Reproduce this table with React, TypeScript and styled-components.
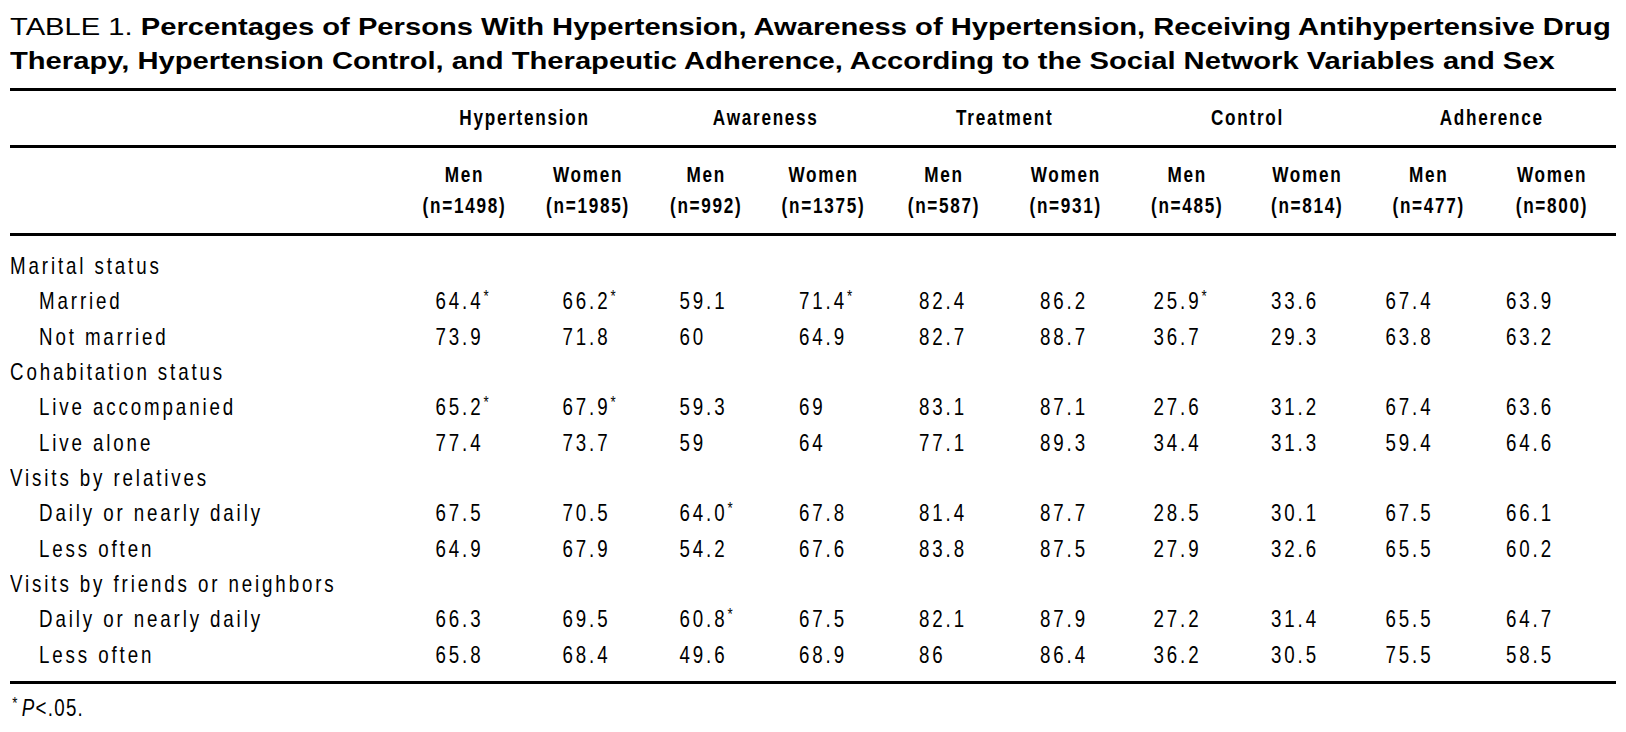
import styled, { createGlobalStyle } from "styled-components";

const GlobalStyle = createGlobalStyle`
    html, body {
        margin: 0;
        padding: 0;
        background: #fff;
        color: #000;
    }
`;

// label column + 10 data columns (Men / Women for each measure)
const COLUMNS = "390.5px 127px 120px 116.5px 119px 122px 121.5px 120.5px 120.5px 121.5px 126px";
const VALUE_PAD = [34.5, 34.5, 31.5, 35, 36, 35, 26.5, 24, 17.5, 17];
// no condensed face is installed, so the narrow type is squeezed horizontally
const NARROW = 0.78;

const GROUPS = ["Hypertension", "Awareness", "Treatment", "Control", "Adherence"];
const SIZES = [
    ["Men", "1498"],
    ["Women", "1985"],
    ["Men", "992"],
    ["Women", "1375"],
    ["Men", "587"],
    ["Women", "931"],
    ["Men", "485"],
    ["Women", "814"],
    ["Men", "477"],
    ["Women", "800"],
];

type Row = { label: string; values?: string[] };

const ROWS: Row[] = [
    { label: "Marital status" },
    { label: "Married", values: ["64.4*", "66.2*", "59.1", "71.4*", "82.4", "86.2", "25.9*", "33.6", "67.4", "63.9"] },
    { label: "Not married", values: ["73.9", "71.8", "60", "64.9", "82.7", "88.7", "36.7", "29.3", "63.8", "63.2"] },
    { label: "Cohabitation status" },
    { label: "Live accompanied", values: ["65.2*", "67.9*", "59.3", "69", "83.1", "87.1", "27.6", "31.2", "67.4", "63.6"] },
    { label: "Live alone", values: ["77.4", "73.7", "59", "64", "77.1", "89.3", "34.4", "31.3", "59.4", "64.6"] },
    { label: "Visits by relatives" },
    { label: "Daily or nearly daily", values: ["67.5", "70.5", "64.0*", "67.8", "81.4", "87.7", "28.5", "30.1", "67.5", "66.1"] },
    { label: "Less often", values: ["64.9", "67.9", "54.2", "67.6", "83.8", "87.5", "27.9", "32.6", "65.5", "60.2"] },
    { label: "Visits by friends or neighbors" },
    { label: "Daily or nearly daily", values: ["66.3", "69.5", "60.8*", "67.5", "82.1", "87.9", "27.2", "31.4", "65.5", "64.7"] },
    { label: "Less often", values: ["65.8", "68.4", "49.6", "68.9", "86", "86.4", "36.2", "30.5", "75.5", "58.5"] },
];

const Page = styled.div`
    width: 1626px;
    height: 732px;
    box-sizing: border-box;
    padding: 9.5px 0 0 10px;
    overflow: hidden;
    background: #fff;
    font-family: "Liberation Sans", Arial, sans-serif;
`;

const Caption = styled.h1`
    margin: 0 0 9.9px;
    font-size: 24px;
    line-height: 34.3px;
    font-weight: 700;
    white-space: nowrap;
    transform: scaleX(1.215);
    transform-origin: left top;
    span {
        font-weight: 400;
    }
`;

const Table = styled.div`
    width: 1605.5px;
`;

const Rule = styled.div`
    height: 3px;
    background: #000;
`;

const GroupRow = styled.div`
    display: grid;
    grid-template-columns: ${COLUMNS};
    height: 54px;
    font-size: 22px;
    line-height: 54px;
    font-weight: 700;
    letter-spacing: 2.2px;
    white-space: nowrap;
`;

const GroupCell = styled.div`
    grid-column: span 2;
    text-align: center;
    transform: scaleX(${NARROW});
`;

const SizeRow = styled.div`
    display: grid;
    grid-template-columns: ${COLUMNS};
    padding: 11.5px 0;
    font-size: 22px;
    line-height: 31px;
    font-weight: 700;
    letter-spacing: 2.2px;
    white-space: nowrap;
`;

const SizeCell = styled.div`
    text-align: center;
    transform: scaleX(${NARROW});
`;

const Body = styled.div`
    padding: 12px 0 8.8px;
`;

const DataRow = styled.div`
    display: grid;
    grid-template-columns: ${COLUMNS};
    font-size: 24px;
    line-height: 35.35px;
    letter-spacing: 3.7px;
    white-space: nowrap;
`;

const Label = styled.div<{ $indent: number }>`
    padding-left: ${(p) => p.$indent}px;
    transform: scaleX(${NARROW});
    transform-origin: ${(p) => p.$indent}px 50%;
`;

const Value = styled.div<{ $pad: number }>`
    padding-left: ${(p) => p.$pad}px;
    transform: scaleX(${NARROW});
    transform-origin: ${(p) => p.$pad}px 50%;
`;

const Star = styled.span`
    font-size: 17px;
    line-height: 0;
    vertical-align: 7px;
    letter-spacing: 0;
`;

const Footnote = styled.p`
    margin: 10px 0 0;
    padding-left: 3px;
    font-size: 24px;
    line-height: 28px;
    letter-spacing: 1.6px;
    white-space: nowrap;
    transform: scaleX(${NARROW});
    transform-origin: left center;
    sup {
        font-size: 17px;
        line-height: 0;
        vertical-align: 7px;
        margin-right: 4px;
    }
`;

const Cell = ({ text, pad }: { text: string; pad: number }) => {
    const starred = text.endsWith("*");
    return (
        <Value $pad={pad}>
            {starred ? text.slice(0, -1) : text}
            {starred && <Star>*</Star>}
        </Value>
    );
};

const App = () => {
    return (
        <Page>
            <GlobalStyle />
            <Caption>
                <span>TABLE 1. </span>Percentages of Persons With Hypertension, Awareness of Hypertension, Receiving
                Antihypertensive Drug
                <br />
                Therapy, Hypertension Control, and Therapeutic Adherence, According to the Social Network Variables and
                Sex
            </Caption>
            <Table>
                <Rule />
                <GroupRow>
                    <div />
                    {GROUPS.map((g) => (
                        <GroupCell key={g}>{g}</GroupCell>
                    ))}
                </GroupRow>
                <Rule />
                <SizeRow>
                    <div />
                    {SIZES.map(([sex, n], i) => (
                        <SizeCell key={i}>
                            {sex}
                            <br />
                            (n={n})
                        </SizeCell>
                    ))}
                </SizeRow>
                <Rule />
                <Body>
                    {ROWS.map((row, i) => (
                        <DataRow key={i}>
                            <Label $indent={row.values ? 29 : 0}>{row.label}</Label>
                            {row.values?.map((v, j) => (
                                <Cell key={j} text={v} pad={VALUE_PAD[j]} />
                            ))}
                        </DataRow>
                    ))}
                </Body>
                <Rule />
            </Table>
            <Footnote>
                <sup>*</sup>
                <i>P</i>&lt;.05.
            </Footnote>
        </Page>
    );
};

export default App;
